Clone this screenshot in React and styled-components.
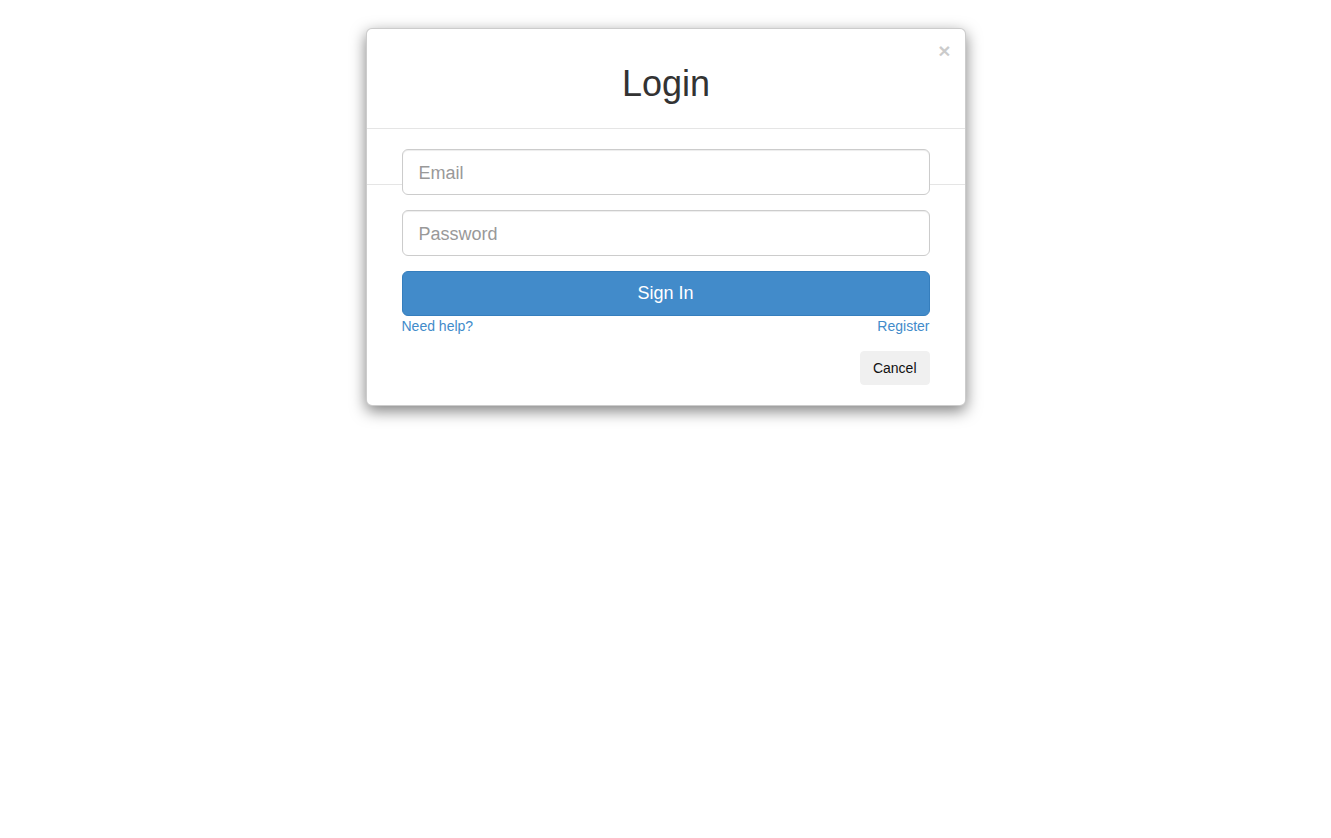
import React from 'react';
import styled, { createGlobalStyle } from 'styled-components';

const GlobalStyle = createGlobalStyle`
  body {
    margin: 0;
    background: #fff;
    font-family: "Liberation Sans", Arial, Helvetica, sans-serif;
    font-size: 14px;
    line-height: 1.428571;
    color: #333;
  }

  * {
    box-sizing: border-box;
  }
`;

const Page = styled.div`
  display: flex;
  justify-content: center;
  padding-top: 28px;
  min-height: 838px;
`;

const ModalBox = styled.div`
  position: relative;
  width: 600px;
  background: #fff;
  border: 1px solid rgba(0, 0, 0, 0.2);
  border-radius: 6px;
  box-shadow: 0 5px 15px rgba(0, 0, 0, 0.5);
  align-self: flex-start;
`;

const Header = styled.div`
  position: relative;
  padding: 35px 15px 24px;
  border-bottom: 1px solid #e5e5e5;
  text-align: center;
`;

const Title = styled.h1`
  margin: 0 0 0 1px;
  font-size: 36px;
  font-weight: 500;
  line-height: 40px;
  color: #333;
`;

const CloseButton = styled.button`
  position: absolute;
  top: 11px;
  right: 14px;
  padding: 0;
  border: 0;
  background: transparent;
  font-family: "Liberation Sans", Arial, sans-serif;
  font-size: 21px;
  font-weight: bold;
  line-height: 1;
  color: #000;
  opacity: 0.2;
  cursor: pointer;
`;

const Body = styled.form`
  position: relative;
  display: flex;
  flex-direction: column;
  gap: 15px;
  padding: 20px 35px 0;

  &::before {
    content: '';
    position: absolute;
    left: 0;
    right: 0;
    top: 55px;
    border-top: 1px solid #e5e5e5;
  }
`;

const Input = styled.input`
  position: relative;
  display: block;
  width: 100%;
  height: 46px;
  padding: 11px 16px 9px;
  font-family: inherit;
  font-size: 18px;
  line-height: 24px;
  color: #555;
  background: #fff;
  border: 1px solid #ccc;
  border-radius: 6px;
  box-shadow: inset 0 1px 1px rgba(0, 0, 0, 0.075);
  outline: none;

  &::placeholder {
    color: #999;
  }
`;

const Button = styled.button`
  display: inline-block;
  font-family: inherit;
  border: 1px solid ${(p) => (p.$primary ? '#357ebd' : '#f0f0f0')};
  background: ${(p) => (p.$primary ? '#428bca' : '#f0f0f0')};
  color: ${(p) => (p.$primary ? '#fff' : '#111')};
  font-size: ${(p) => (p.$primary ? '18px' : '14px')};
  line-height: ${(p) => (p.$primary ? '23px' : '20px')};
  padding: ${(p) => (p.$primary ? '10px 16px' : '6px 12px')};
  border-radius: ${(p) => (p.$primary ? '6px' : '4px')};
  width: ${(p) => (p.$block ? '100%' : 'auto')};
  cursor: pointer;
`;

const LinkRow = styled.div`
  display: flex;
  justify-content: space-between;
  margin-top: -14px;
`;

const Link = styled.a`
  color: #428bca;
  font-size: 14px;
  text-decoration: none;
`;

const Footer = styled.div`
  display: flex;
  justify-content: flex-end;
  padding: 14px 35px 20px;
`;

const App = () => (
  <>
    <GlobalStyle />
    <Page>
      <ModalBox>
        <Header>
          <CloseButton type="button" aria-label="Close">
            ×
          </CloseButton>
          <Title>Login</Title>
        </Header>
        <Body onSubmit={(e) => e.preventDefault()}>
          <Input type="email" placeholder="Email" />
          <Input type="password" placeholder="Password" />
          <Button type="submit" $primary $block>
            Sign In
          </Button>
          <LinkRow>
            <Link href="#">Need help?</Link>
            <Link href="#">Register</Link>
          </LinkRow>
        </Body>
        <Footer>
          <Button type="button">Cancel</Button>
        </Footer>
      </ModalBox>
    </Page>
  </>
);

export default App;
